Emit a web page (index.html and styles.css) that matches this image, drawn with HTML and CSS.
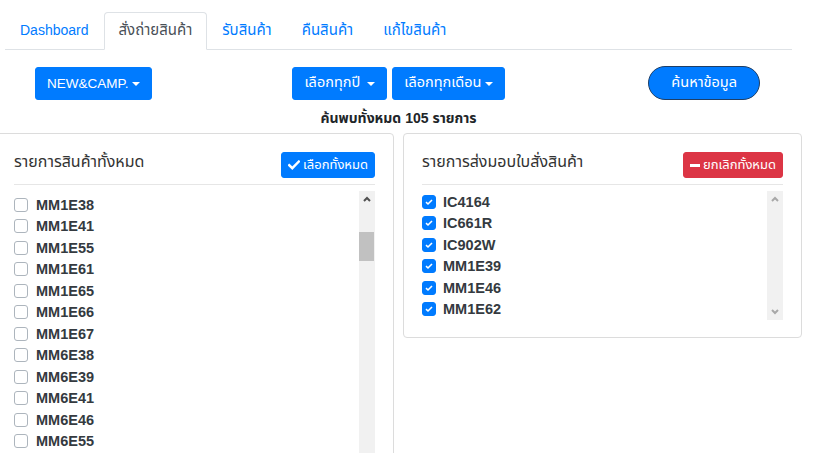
FILE: index.html
```html
<!DOCTYPE html>
<html lang="th">
<head>
<meta charset="utf-8">
<title>สั่งถ่ายสินค้า</title>
<link rel="stylesheet" href="styles.css">
</head>
<body>
<div class="page">
  <ul class="tabs">
    <li class="tab"><a href="#" class="latin">Dashboard</a></li>
    <li class="tab active"><a href="#">สั่งถ่ายสินค้า</a></li>
    <li class="tab"><a href="#">รับสินค้า</a></li>
    <li class="tab"><a href="#">คืนสินค้า</a></li>
    <li class="tab"><a href="#">แก้ไขสินค้า</a></li>
  </ul>

  <div class="toolbar">
    <div class="tb-left"><button class="btn btn-primary dd latin">NEW&amp;CAMP.</button></div>
    <div class="tb-mid">
      <button class="btn btn-primary dd">เลือกทุกปี&nbsp;</button>
      <button class="btn btn-primary dd">เลือกทุกเดือน</button>
    </div>
    <div class="tb-right"><button class="btn btn-primary pill">ค้นหาข้อมูล</button></div>
  </div>

  <p class="count">ค้นพบทั้งหมด 105 รายการ</p>

  <div class="cards">
    <section class="card card-left">
      <div class="card-head">
        <h2 class="card-title">รายการสินค้าทั้งหมด</h2>
        <button class="btn btn-sm btn-primary">
          <svg class="ico" width="12" height="10" viewBox="0 0 12 10"><path d="M1.2 5.2 L4.3 8.2 L10.8 1.6" fill="none" stroke="#fff" stroke-width="2.4" stroke-linecap="square"/></svg>
          เลือกทั้งหมด
        </button>
      </div>
      <hr class="sep">
      <div class="list-wrap list-tall">
        <ul class="list list-offset">
          <li><span class="cb"></span>MM1E38</li>
          <li><span class="cb"></span>MM1E41</li>
          <li><span class="cb"></span>MM1E55</li>
          <li><span class="cb"></span>MM1E61</li>
          <li><span class="cb"></span>MM1E65</li>
          <li><span class="cb"></span>MM1E66</li>
          <li><span class="cb"></span>MM1E67</li>
          <li><span class="cb"></span>MM6E38</li>
          <li><span class="cb"></span>MM6E39</li>
          <li><span class="cb"></span>MM6E41</li>
          <li><span class="cb"></span>MM6E46</li>
          <li><span class="cb"></span>MM6E55</li>
        </ul>
        <div class="sbar">
          <div class="sb-arrow"><svg width="8" height="6" viewBox="0 0 8 6"><path d="M1 5 L4 2 L7 5" fill="none" stroke="#505050" stroke-width="2"/></svg></div>
          <div class="sb-track"><div class="sb-thumb"></div></div>
        </div>
      </div>
    </section>

    <section class="card card-right">
      <div class="card-head">
        <h2 class="card-title">รายการส่งมอบใบสั่งสินค้า</h2>
        <button class="btn btn-sm btn-danger">
          <span class="minus"></span>
          ยกเลิกทั้งหมด
        </button>
      </div>
      <hr class="sep">
      <div class="list-wrap list-short">
        <ul class="list">
          <li><span class="cb on"><svg width="10" height="8" viewBox="0 0 10 8"><path d="M2 4.2 L4 6 L8 2" fill="none" stroke="#fff" stroke-width="1.6"/></svg></span>IC4164</li>
          <li><span class="cb on"><svg width="10" height="8" viewBox="0 0 10 8"><path d="M2 4.2 L4 6 L8 2" fill="none" stroke="#fff" stroke-width="1.6"/></svg></span>IC661R</li>
          <li><span class="cb on"><svg width="10" height="8" viewBox="0 0 10 8"><path d="M2 4.2 L4 6 L8 2" fill="none" stroke="#fff" stroke-width="1.6"/></svg></span>IC902W</li>
          <li><span class="cb on"><svg width="10" height="8" viewBox="0 0 10 8"><path d="M2 4.2 L4 6 L8 2" fill="none" stroke="#fff" stroke-width="1.6"/></svg></span>MM1E39</li>
          <li><span class="cb on"><svg width="10" height="8" viewBox="0 0 10 8"><path d="M2 4.2 L4 6 L8 2" fill="none" stroke="#fff" stroke-width="1.6"/></svg></span>MM1E46</li>
          <li><span class="cb on"><svg width="10" height="8" viewBox="0 0 10 8"><path d="M2 4.2 L4 6 L8 2" fill="none" stroke="#fff" stroke-width="1.6"/></svg></span>MM1E62</li>
        </ul>
        <div class="sbar">
          <div class="sb-arrow"><svg width="8" height="6" viewBox="0 0 8 6"><path d="M1 5 L4 2 L7 5" fill="none" stroke="#a8a8a8" stroke-width="2"/></svg></div>
          <div class="sb-track"></div>
          <div class="sb-arrow"><svg width="8" height="6" viewBox="0 0 8 6"><path d="M1 1 L4 4 L7 1" fill="none" stroke="#a8a8a8" stroke-width="2"/></svg></div>
        </div>
      </div>
    </section>
  </div>
</div>
</body>
</html>
```

FILE: styles.css
```css
* { box-sizing: border-box; }

html, body {
  margin: 0;
  padding: 0;
  background: #fff;
  overflow: hidden;
}

body {
  font-family: "Liberation Sans", Arial, "Noto Sans", "Noto Sans Thai", sans-serif;
  font-size: 14px;
  color: #212529;
}

.page {
  width: 797px;
}

/* ---------- tabs ---------- */
.tabs {
  list-style: none;
  margin: 12px 5px 0;
  padding: 0;
  display: flex;
  height: 38px;
  border-bottom: 1px solid #dee2e6;
}

.tab {
  height: 38px;
  margin-bottom: -1px;
  border: 1px solid transparent;
  border-top-left-radius: 4px;
  border-top-right-radius: 4px;
  display: flex;
  align-items: center;
  padding: 0 14px 2px;
}

.tab a {
  color: #007bff;
  text-decoration: none;
  font-size: 15px;
}

.tab a.latin {
  font-size: 14px;
}

.tab.active {
  background: #fff;
  border-color: #dee2e6 #dee2e6 #fff;
}

.tab.active a {
  color: #495057;
}

/* ---------- toolbar ---------- */
.toolbar {
  margin-top: 16px;
  display: grid;
  grid-template-columns: 1fr auto 1fr;
  align-items: center;
}

.tb-left {
  justify-self: start;
  padding-left: 35px;
}

.tb-mid {
  display: flex;
  gap: 5px;
}

.tb-right {
  justify-self: end;
  padding-right: 37px;
}

.btn {
  font-family: inherit;
  font-size: 14.5px;
  height: 33px;
  padding: 0 11px;
  border: 1px solid transparent;
  border-radius: 3px;
  display: inline-flex;
  align-items: center;
  cursor: pointer;
  white-space: nowrap;
}

.btn.latin {
  font-size: 13.5px;
}

.btn-primary {
  background: #007bff;
  border-color: #007bff;
  color: #fff;
}

.btn-danger {
  background: #dc3545;
  border-color: #dc3545;
  color: #fff;
}

.dd::after {
  content: "";
  display: inline-block;
  margin-left: 3px;
  border-top: 4px solid #fff;
  border-left: 4px solid transparent;
  border-right: 4px solid transparent;
  margin-top: 1px;
}

.pill {
  height: 34px;
  padding: 0 22px;
  border-radius: 17px;
  border: 1px solid #1f3f66;
}

.count {
  margin: 8px 0 0;
  line-height: 20px;
  text-align: center;
  font-size: 14px;
  font-weight: bold;
  color: #212529;
}

/* ---------- cards ---------- */
.cards {
  margin: 5px -5px 0;
  display: grid;
  grid-template-columns: 399px 399px;
  column-gap: 9px;
  align-items: start;
}

.card {
  border: 1px solid #dcdcdc;
  border-radius: 4px;
  padding: 18px 18px 17px;
  background: #fff;
}

.card-head {
  display: flex;
  justify-content: space-between;
  align-items: flex-start;
}

.card-title {
  margin: 0;
  font-size: 16px;
  font-weight: normal;
  line-height: 20px;
  color: #333;
}

.btn-sm {
  height: 26px;
  font-size: 13px;
  padding: 0 6px;
  border-radius: 3px;
}

.ico {
  margin-right: 3px;
}

.minus {
  display: inline-block;
  width: 10px;
  height: 3px;
  background: #fff;
  margin-right: 3px;
}

.sep {
  margin: 6px 0 0;
  border: 0;
  border-top: 1px solid #e6e6e6;
  height: 0;
}

.list-wrap {
  margin-top: 6px;
  display: flex;
}

.list-short {
  height: 129px;
}

.list-tall {
  height: 300px;
}

.list {
  flex: 1;
  list-style: none;
  margin: 0;
  padding: 0;
  overflow: hidden;
}

.list-offset {
  padding-top: 3px;
}

.list li {
  height: 21.5px;
  display: flex;
  align-items: center;
  font-size: 14.5px;
  font-weight: bold;
  color: #343a40;
}

.cb {
  width: 14px;
  height: 14px;
  flex: none;
  border: 1px solid #adb5bd;
  border-radius: 3px;
  background: #fff;
  margin-right: 8px;
  display: inline-flex;
  align-items: center;
  justify-content: center;
}

.cb.on {
  background: #007bff;
  border-color: #007bff;
  margin-right: 7px;
}

/* fake scrollbar */
.sbar {
  width: 16px;
  flex: none;
  background: #f1f1f1;
  display: flex;
  flex-direction: column;
}

.sb-arrow {
  height: 16px;
  display: flex;
  align-items: center;
  justify-content: center;
}

.sb-track {
  flex: 1;
}

.sb-thumb {
  margin-top: 25px;
  width: 15px;
  height: 29px;
  background: #c1c1c1;
}
```
